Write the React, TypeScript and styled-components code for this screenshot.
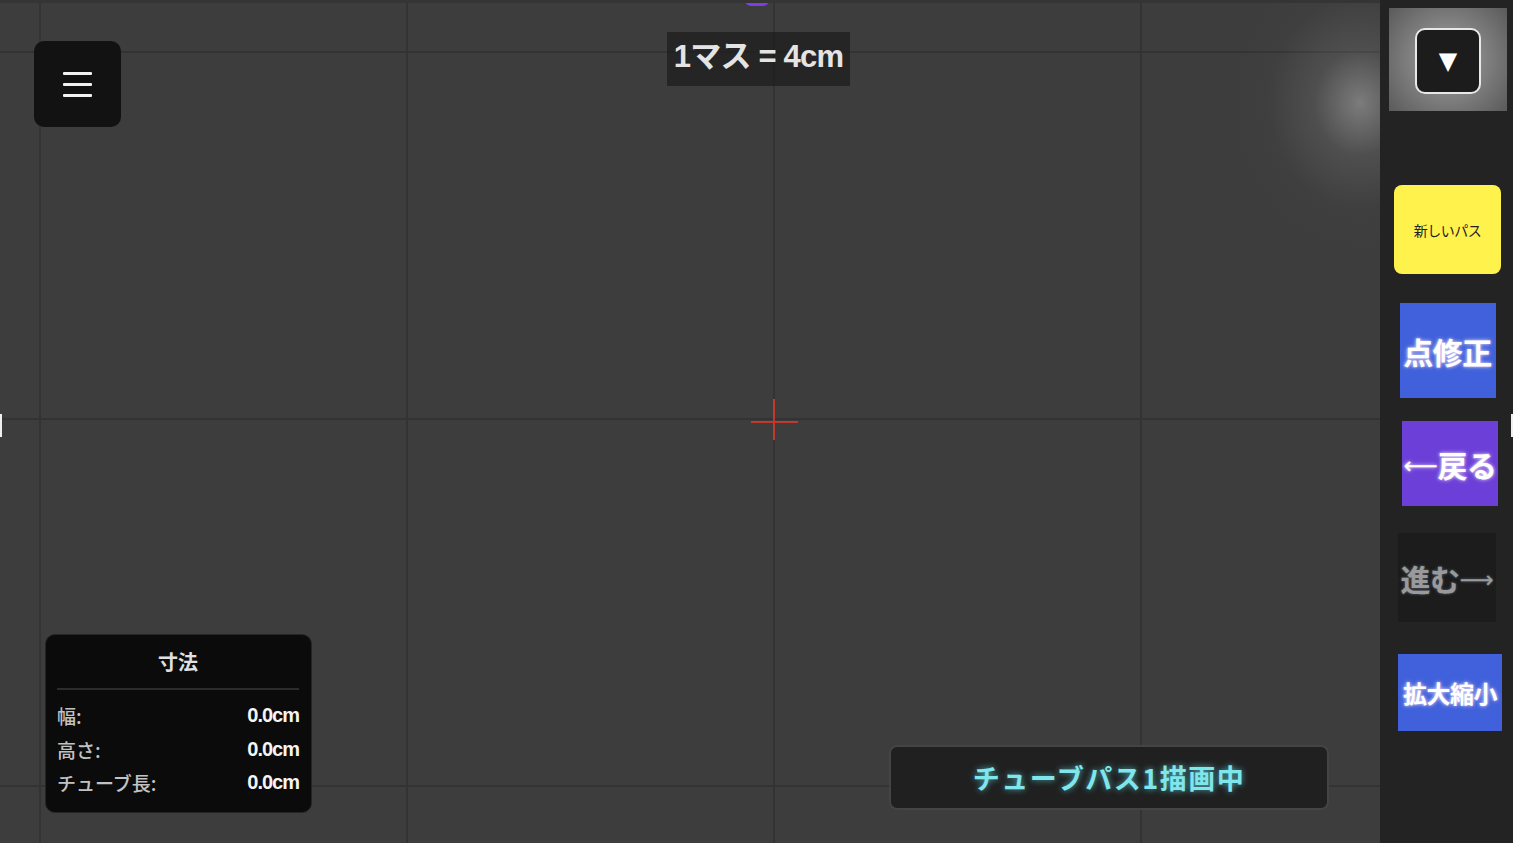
import styled, { createGlobalStyle } from 'styled-components';

const GlobalStyle = createGlobalStyle`
  html, body {
    margin: 0;
    padding: 0;
    background: #222;
    font-family: "Noto Sans", "Noto Sans CJK JP", sans-serif;
    overflow: hidden;
  }
`;

const Screen = styled.div`
  display: flex;
  width: 100vw;
  height: 100vh;
`;

const Canvas = styled.div`
  position: relative;
  flex: 1;
  overflow: hidden;
  background-color: #3d3d3d;
  background-image:
    linear-gradient(to right, #333 0, #333 2px, transparent 2px),
    linear-gradient(to bottom, #333 0, #333 2px, transparent 2px);
  background-size: 367px 367px;
  background-position: 39px 48px;
  border-top: 3px solid #353535;
  box-sizing: border-box;
`;

const TopTab = styled.div`
  position: absolute;
  top: -3px;
  left: 745px;
  width: 24px;
  height: 6px;
  border-radius: 0 0 6px 6px;
  background: #7b3fe4;
`;

const EdgeMark = styled.div<{ $side: 'left' | 'right' }>`
  position: absolute;
  top: ${p => (p.$side === 'left' ? '411px' : '414px')};
  ${p => (p.$side === 'left' ? 'left: 0;' : 'right: 0;')}
  width: 2px;
  height: 23px;
  background: #f0f0f0;
`;

const MenuButton = styled.button`
  position: absolute;
  top: 38px;
  left: 34px;
  width: 87px;
  height: 86px;
  border: none;
  border-radius: 10px;
  background: #121212;
  display: flex;
  align-items: center;
  justify-content: center;
  padding: 0;
`;

const Burger = styled.div`
  display: flex;
  flex-direction: column;
  gap: 8px;
  span {
    display: block;
    width: 29px;
    height: 3px;
    border-radius: 1px;
    background: #f2f2f2;
  }
`;

const ScaleLabel = styled.div`
  position: absolute;
  top: 29px;
  left: 667px;
  width: 183px;
  height: 54px;
  padding-bottom: 6px;
  box-sizing: border-box;
  background: rgba(30, 30, 30, 0.75);
  color: #e4e4e4;
  font-family: "Liberation Sans", "Noto Sans CJK JP", sans-serif;
  font-size: 31px;
  font-weight: 700;
  letter-spacing: -0.8px;
  line-height: 1;
  display: flex;
  align-items: center;
  justify-content: center;
  white-space: nowrap;
`;

const Crosshair = styled.svg`
  position: absolute;
  left: 750px;
  top: 391px;
  filter: blur(0.4px);
`;

const Glow = styled.div`
  position: absolute;
  right: -110px;
  top: -50px;
  width: 260px;
  height: 300px;
  background: radial-gradient(ellipse 50% 50% at 50% 50%, rgba(200,200,200,0.45) 0%, rgba(150,150,150,0.2) 35%, rgba(100,100,100,0.06) 70%, transparent 100%);
  pointer-events: none;
`;

const DimPanel = styled.div`
  position: absolute;
  left: 45px;
  top: 631px;
  width: 267px;
  height: 179px;
  box-sizing: border-box;
  padding: 15px 12px 0 11px;
  background: #0b0b0b;
  border: 1px solid #262626;
  border-radius: 10px;
  color: #e0e0e0;
  font-family: "Noto Sans CJK JP", sans-serif;
`;

const DimTitle = styled.div`
  text-align: center;
  font-size: 20px;
  font-weight: 700;
  line-height: 24px;
  padding-bottom: 14px;
  border-bottom: 2px solid #2c2c2c;
  margin-bottom: 9px;
`;

const DimRow = styled.div`
  display: flex;
  justify-content: space-between;
  align-items: center;
  height: 33.5px;
  font-size: 19px;
`;

const DimLabel = styled.span`
  color: #c2c2c2;
  font-weight: 500;
`;

const DimValue = styled.span`
  color: #f4f4f4;
  font-weight: 700;
  font-size: 20px;
  font-family: "Liberation Sans", sans-serif;
  letter-spacing: -1px;
`;

const Status = styled.div`
  position: absolute;
  left: 889px;
  top: 742px;
  width: 440px;
  height: 65px;
  box-sizing: border-box;
  background: #202020;
  border: 2px solid #444;
  border-radius: 8px;
  display: flex;
  align-items: center;
  justify-content: center;
  color: #7fe6ec;
  font-family: "Noto Sans CJK JP", sans-serif;
  font-weight: 700;
  font-size: 27px;
  letter-spacing: 1.5px;
  text-shadow: 0 0 6px rgba(100, 230, 240, 0.7);
`;

const Sidebar = styled.div`
  position: relative;
  width: 133px;
  flex-shrink: 0;
  background: #232323;
  display: flex;
  flex-direction: column;
  align-items: center;
  font-family: "Noto Sans CJK JP", sans-serif;
`;

const DropdownWell = styled.div`
  margin-top: 8px;
  margin-left: 3px;
  width: 118px;
  height: 103px;
  background: radial-gradient(circle at 50% 50%, #b8b8b8 0%, #8a8a8a 35%, #5a5a5a 100%);
  display: flex;
  align-items: center;
  justify-content: center;
`;

const DropdownButton = styled.button`
  width: 66px;
  height: 66px;
  border-radius: 10px;
  border: 2px solid #e8e8e8;
  background: #1c1c1c;
  color: #fff;
  font-family: "DejaVu Sans", sans-serif;
  font-size: 24px;
  padding: 0;
  display: flex;
  align-items: center;
  justify-content: center;
  box-sizing: border-box;
  margin-top: 2px;
`;

type Kind = 'yellow' | 'blue' | 'purple' | 'dark';

const bg: Record<Kind, string> = {
  yellow: '#fff24d',
  blue: '#4061db',
  purple: '#6c3fd8',
  dark: '#1c1c1c',
};

const ToolButton = styled.button<{ $kind: Kind; $w: number; $h: number; $top: number; $dx: number; $size: number }>`
  margin-top: ${p => p.$top}px;
  margin-left: ${p => p.$dx}px;
  width: ${p => p.$w}px;
  height: ${p => p.$h}px;
  border: none;
  border-radius: ${p => (p.$kind === 'yellow' ? '8px' : '0')};
  background: ${p => bg[p.$kind]};
  color: ${p => (p.$kind === 'yellow' ? '#222' : p.$kind === 'dark' ? '#9a9a9a' : '#fff')};
  font-family: "Liberation Sans", "Noto Sans CJK JP", sans-serif;
  font-size: ${p => p.$size}px;
  font-weight: ${p => (p.$kind === 'yellow' ? 400 : 700)};
  padding: 0;
  white-space: nowrap;
  letter-spacing: -0.5px;
  display: flex;
  align-items: center;
  justify-content: center;
  text-shadow: ${p =>
    p.$kind === 'yellow'
      ? 'none'
      : p.$kind === 'dark'
        ? '0 0 3px rgba(150,170,200,0.5)'
        : '0 0 4px rgba(255,255,255,0.7), 1px 0 2px rgba(255,120,220,0.5), -1px 0 2px rgba(120,200,255,0.5)'};
`;

const Arrow = styled.span`
  font-weight: 400;
  font-family: "DejaVu Sans", sans-serif;
  font-size: 0.8em;
  margin-top: 4px;
`;

export default function App() {
  return (
    <Screen>
      <GlobalStyle />
      <Canvas>
        <TopTab />
        <EdgeMark $side="left" />
        <Glow />
        <MenuButton aria-label="menu">
          <Burger>
            <span />
            <span />
            <span />
          </Burger>
        </MenuButton>
        <ScaleLabel>1マス = 4cm</ScaleLabel>
        <Crosshair width="48" height="48" viewBox="0 0 48 48">
          <line x1="24" y1="5" x2="24" y2="46" stroke="#c0392b" strokeWidth="2" />
          <line x1="1" y1="28" x2="48" y2="28" stroke="#c0392b" strokeWidth="2" />
        </Crosshair>
        <DimPanel>
          <DimTitle>寸法</DimTitle>
          <DimRow>
            <DimLabel>幅:</DimLabel>
            <DimValue>0.0cm</DimValue>
          </DimRow>
          <DimRow>
            <DimLabel>高さ:</DimLabel>
            <DimValue>0.0cm</DimValue>
          </DimRow>
          <DimRow>
            <DimLabel>チューブ長:</DimLabel>
            <DimValue>0.0cm</DimValue>
          </DimRow>
        </DimPanel>
        <Status>チューブパス1描画中</Status>
      </Canvas>
      <Sidebar>
        <EdgeMark $side="right" />
        <DropdownWell>
          <DropdownButton aria-label="open">▼</DropdownButton>
        </DropdownWell>
        <ToolButton $kind="yellow" $w={107} $h={89} $top={74} $dx={2} $size={14}>新しいパス</ToolButton>
        <ToolButton $kind="blue" $w={96} $h={95} $top={29} $dx={2} $size={30}>点修正</ToolButton>
        <ToolButton $kind="purple" $w={96} $h={85} $top={23} $dx={7} $size={30}><Arrow>⟵</Arrow>戻る</ToolButton>
        <ToolButton $kind="dark" $w={98} $h={89} $top={27} $dx={1} $size={30}>進む<Arrow>⟶</Arrow></ToolButton>
        <ToolButton $kind="blue" $w={104} $h={77} $top={32} $dx={7} $size={24}>拡大縮小</ToolButton>
      </Sidebar>
    </Screen>
  );
}
